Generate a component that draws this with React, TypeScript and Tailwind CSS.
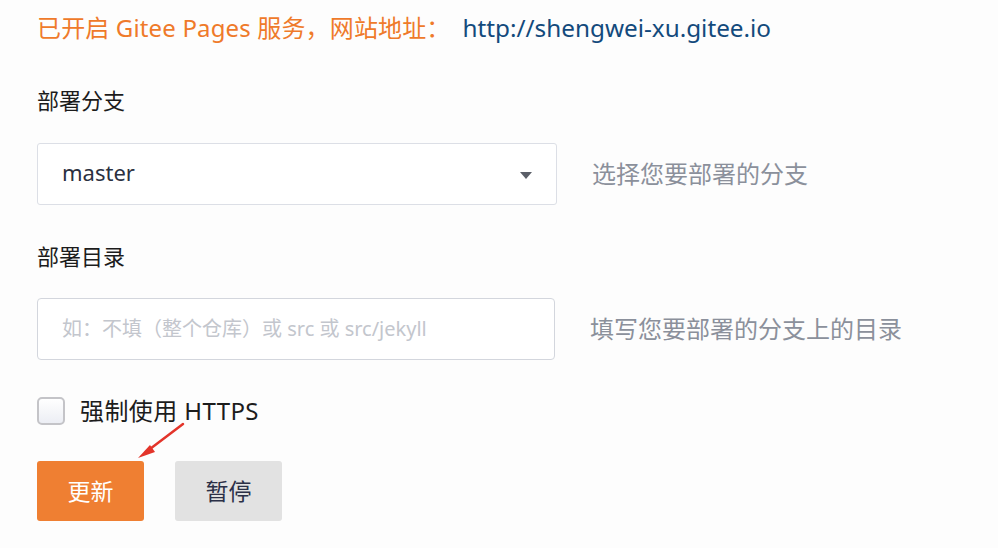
import React from 'react';

const font = { fontFamily: '"Noto Sans", "Noto Sans CJK SC", sans-serif' };

// подсказка справа от поля
const Hint: React.FC<{ text: string }> = ({ text }) => (
  <span className="ml-[35px] text-[24px] leading-[32px] text-[#8b909b]">{text}</span>
);

export default function App() {
  return (
    <div className="relative min-h-[548px] w-[998px] bg-[#fdfdfd] pl-[37px] pt-[12px]" style={font}>
      <div className="flex items-center text-[24px] leading-[32px]">
        <span className="tracking-[0.15px] text-[#ef7a2a]">已开启 Gitee Pages 服务，网站地址：</span>
        <a className="ml-[12px] text-[24.3px] text-[#134a7c]">http://shengwei-xu.gitee.io</a>
      </div>

      <div className="mt-[40px] text-[22px] leading-[32px] text-[#1c1c1c]">部署分支</div>
      <div className="mt-[27px] flex items-center">
        <div className="flex h-[62px] w-[520px] items-center justify-between rounded-[3px] border border-[#dcdfe6] bg-white pb-[3px] pl-[24px] pr-[24px]">
          <span className="text-[22px] text-[#2b3040]">master</span>
          <svg width="12" height="7" viewBox="0 0 12 7" className="mt-[6px]">
            <path d="M0 0 L12 0 L6 7 Z" fill="#5b5f68" />
          </svg>
        </div>
        <Hint text="选择您要部署的分支" />
      </div>

      <div className="mt-[35px] text-[22px] leading-[32px] text-[#1c1c1c]">部署目录</div>
      <div className="mt-[26px] flex items-center">
        <div className="flex h-[62px] w-[518px] items-center rounded-[4px] border border-[#d3d6dd] bg-white pl-[24px]">
          <span className="text-[20px] text-[#c3c6cd]">如：不填（整个仓库）或 src 或 src/jekyll</span>
        </div>
        <Hint text="填写您要部署的分支上的目录" />
      </div>

      <div className="mt-[35px] flex items-center">
        <div className="h-[28px] w-[28px] rounded-[5px] border-2 border-[#c4c4c8] bg-gradient-to-b from-white to-[#eceef4]" />
        <span className="ml-[15px] text-[24px] leading-[32px] tracking-[0.4px] text-[#1c1c1c]">强制使用 HTTPS</span>
      </div>

      <div className="mt-[34px] flex gap-[31px]">
        <button className="h-[60px] w-[107px] rounded-[3px] bg-[#ef7f32] text-[23px] text-white">更新</button>
        <button className="h-[60px] w-[107px] rounded-[3px] bg-[#e2e2e2] text-[23px] text-[#2b3047]">暂停</button>
      </div>

      {/* красная стрелка-указатель */}
      <svg className="absolute left-[130px] top-[418px]" width="60" height="48" viewBox="0 0 60 48">
        <line x1="53" y1="6" x2="16" y2="34" stroke="#e3342a" strokeWidth="2.5" strokeLinecap="round" />
        <path d="M8 40 L20 27 L25 34 Z" fill="#e3342a" />
      </svg>
    </div>
  );
}
